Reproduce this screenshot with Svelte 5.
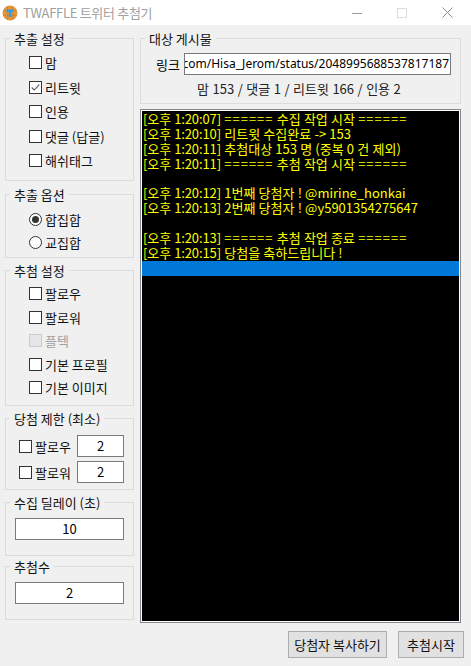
<script lang="ts">
	const extract = [
		{ label: '맘', checked: false },
		{ label: '리트윗', checked: true },
		{ label: '인용', checked: false },
		{ label: '댓글 (답글)', checked: false },
		{ label: '해쉬태그', checked: false }
	];
	const filters = [
		{ label: '팔로우', disabled: false },
		{ label: '팔로워', disabled: false },
		{ label: '플텍', disabled: true },
		{ label: '기본 프로필', disabled: false },
		{ label: '기본 이미지', disabled: false }
	];
	const limits = ['팔로우', '팔로워'];

	// banner: wrapped in ====== on both sides
	const log = [
		{ time: '1:20:07', text: '수집 작업 시작', banner: true },
		{ time: '1:20:10', text: '리트윗 수집완료 -> 153' },
		{ time: '1:20:11', text: '추첨대상 153 명 (중복 0 건 제외)' },
		{ time: '1:20:11', text: '추첨 작업 시작', banner: true },
		null,
		{ time: '1:20:12', text: '1번째 당첨자 ! @mirine_honkai' },
		{ time: '1:20:13', text: '2번째 당첨자 ! @y5901354275647' },
		null,
		{ time: '1:20:13', text: '추첨 작업 종료', banner: true },
		{ time: '1:20:15', text: '당첨을 축하드립니다 !' }
	];
</script>

<div class="window">
	<header class="titlebar">
		<svg class="logo" viewBox="0 0 16 16" width="16" height="16" aria-hidden="true">
			<circle cx="8" cy="8" r="7.5" fill="#e2963c" />
			<path d="M1.500 5.500h13M1 10.500h14M5.500 1.500v13M10.500 1.500v13" stroke="#c97a28" stroke-width=".6" />
			<path d="M4.500 4.500h7v2.200H9.200V12H6.800V6.700H4.500z" fill="#2f9fe6" />
		</svg>
		<span class="title">TWAFFLE 트위터 추첨기</span>
		<div class="controls">
			<svg width="10" height="10" viewBox="0 0 10 10"><path d="M0 5.5h10" stroke="#9a9a9a" /></svg>
			<svg width="10" height="10" viewBox="0 0 10 10"><rect x=".5" y=".5" width="9" height="9" fill="none" stroke="#dcdcdc" /></svg>
			<svg width="11" height="11" viewBox="0 0 11 11"><path d="M.5 .5l10 10M10.500 .5l-10 10" stroke="#8a8a8a" fill="none" /></svg>
		</div>
	</header>

	<main class="body">
		<aside class="side">
			<fieldset class="group g-extract">
				<legend>추출 설정</legend>
				<div class="stack">
					{#each extract as item}
						<label class="check">
							<span class="box">
								{#if item.checked}
									<svg viewBox="0 0 13 13" width="11" height="11"><path d="M2 6.500l3 3 6-6.500" fill="none" stroke="#555" stroke-width="1.300" /></svg>
								{/if}
							</span>
							{item.label}
						</label>
					{/each}
				</div>
			</fieldset>

			<fieldset class="group g-option">
				<legend>추출 옵션</legend>
				<div class="stack radios">
					<label class="check"><span class="radio on"></span>합집합</label>
					<label class="check"><span class="radio"></span>교집합</label>
				</div>
			</fieldset>

			<fieldset class="group g-filter">
				<legend>추첨 설정</legend>
				<div class="stack filters">
					{#each filters as item}
						<label class="check" class:disabled={item.disabled}>
							<span class="box"></span>
							{item.label}
						</label>
					{/each}
				</div>
			</fieldset>

			<fieldset class="group g-limit">
				<legend>당첨 제한 (최소)</legend>
				<div class="limits">
					{#each limits as item}
						<div class="limit">
							<label class="check"><span class="box"></span>{item}</label>
							<div class="field num">2</div>
						</div>
					{/each}
				</div>
			</fieldset>

			<fieldset class="group g-single">
				<legend>수집 딜레이 (초)</legend>
				<div class="field wide">10</div>
			</fieldset>

			<fieldset class="group g-single count">
				<legend>추첨수</legend>
				<div class="field wide">2</div>
			</fieldset>
		</aside>

		<section class="content">
			<fieldset class="group g-target">
				<legend>대상 게시물</legend>
				<div class="link-row">
					<span class="link-label">링크</span>
					<div class="field link"><span>https://x.com/Hisa_Jerom/status/2048995688537817187</span></div>
				</div>
				<div class="stats">맘 153 / 댓글 1 / 리트윗 166 / 인용 2</div>
			</fieldset>

			<div class="log">
				{#each log as row}
					<div class="line">{#if row}<span class="time">[오후 {row.time}]</span> {#if row.banner}<span class="eq">======</span> {row.text} <span class="eq">======</span>{:else}{row.text}{/if}{/if}</div>
				{/each}
				<div class="line selected"></div>
			</div>

			<div class="actions">
				<button class="copy">당첨자 복사하기</button>
				<button class="start">추첨시작</button>
			</div>
		</section>
	</main>
</div>

<style>
	:global(body) {
		margin: 0;
		background: #f0f0f0;
	}

	.window {
		width: 471px;
		height: 666px;
		overflow: hidden;
		background: #f0f0f0;
		color: #000;
		font-family: 'Noto Sans CJK KR', 'Noto Sans', sans-serif;
		font-size: 13px;
		line-height: 15px;
	}

	.titlebar {
		display: flex;
		align-items: center;
		height: 25px;
		padding-left: 2px;
		background: #fff;
	}
	.logo {
		margin-right: 5px;
	}
	.title {
		color: #a0a0a0;
		letter-spacing: -0.300px;
	}
	.controls {
		display: flex;
		align-items: center;
		gap: 35px;
		margin-left: auto;
		margin-right: 18px;
	}

	.body {
		display: flex;
		gap: 6px;
		padding: 6px 7px 0 5px;
	}

	.side {
		display: flex;
		flex-direction: column;
		width: 129px;
		flex: none;
	}

	.group {
		margin: 0;
		padding: 0;
		min-width: 0;
		border: 1px solid #dcdcdc;
		box-sizing: border-box;
	}
	legend {
		margin-left: 4px;
		padding: 0 4px;
		line-height: 15px;
		color: #111;
	}

	.g-extract {
		height: 150px;
	}
	.g-option {
		height: 71px;
		margin-top: 6px;
	}
	.g-filter {
		height: 143px;
		margin-top: 5px;
	}
	.g-limit {
		height: 79px;
		margin-top: 5px;
	}
	.g-single {
		height: 61px;
		margin-top: 5px;
	}
	.g-single.count {
		margin-top: 3px;
	}

	.stack {
		display: flex;
		flex-direction: column;
		gap: 9.500px;
		padding: 9px 0 0 23px;
	}
	.radios {
		gap: 8px;
		padding-top: 10px;
	}
	.filters {
		gap: 8.500px;
		padding-top: 8px;
	}

	.check {
		display: flex;
		align-items: center;
		gap: 3px;
		height: 15px;
		white-space: nowrap;
		color: #111;
	}
	.check.disabled {
		color: #a0a0a0;
	}

	.box {
		display: flex;
		align-items: center;
		justify-content: center;
		width: 11px;
		height: 11px;
		flex: none;
		background: #fff;
		border: 1px solid #333;
	}
	.disabled .box {
		background: #e6e6e6;
		border-color: #ccc;
	}

	.radio {
		position: relative;
		width: 11px;
		height: 11px;
		flex: none;
		background: #fff;
		border: 1px solid #333;
		border-radius: 50%;
	}
	.radio.on::after {
		content: '';
		position: absolute;
		inset: 2px;
		border-radius: 50%;
		background: #333;
	}

	.field {
		box-sizing: border-box;
		height: 22px;
		background: #fff;
		border: 1px solid #7a7a7a;
		text-align: center;
		line-height: 20px;
	}
	.wide {
		width: 109px;
		margin: 8px 0 0 9px;
	}

	.limits {
		display: flex;
		flex-direction: column;
		gap: 4px;
		padding: 9px 0 0 13px;
	}
	.limit {
		display: flex;
		align-items: center;
		justify-content: space-between;
		width: 105px;
	}
	.num {
		width: 47px;
	}

	.content {
		display: flex;
		flex-direction: column;
		width: 321px;
		flex: none;
	}
	.g-target {
		height: 73px;
	}
	.link-row {
		display: flex;
		align-items: center;
		padding-top: 7px;
	}
	.link-label {
		margin-left: 15px;
		width: 28px;
		flex: none;
	}
	.link {
		width: 267px;
		overflow: hidden;
		display: flex;
		justify-content: flex-end;
		white-space: nowrap;
		padding-right: 1px;
		font-family: 'Noto Sans', sans-serif;
		font-size: 12px;
		line-height: 20px;
	}
	.stats {
		margin-top: 6px;
		padding-left: 56px;
		color: #222;
		word-spacing: 0.600px;
	}

	.log {
		box-sizing: border-box;
		width: 321px;
		height: 514px;
		margin-top: 5px;
		padding: 2px 1px 1px;
		background: #000;
		border: 1px solid #828790;
		outline: 1px solid #fff;
		outline-offset: -2px;
		color: #ffff00;
		line-height: 14.900px;
		word-spacing: 0.300px;
	}
	.line {
		height: 14.900px;
		padding-left: 1px;
		white-space: pre;
	}
	.time {
		letter-spacing: -0.100px;
	}
	.eq {
		letter-spacing: 1px;
	}
	.selected {
		background: #0078d7;
	}

	.actions {
		display: flex;
		justify-content: flex-end;
		gap: 11px;
		margin-top: 8px;
		margin-right: -3px;
	}
	button {
		box-sizing: border-box;
		height: 27px;
		padding: 0;
		background: #e1e1e1;
		border: 1px solid #adadad;
		font: inherit;
		color: #111;
	}
	.copy {
		width: 99px;
	}
	.start {
		width: 66px;
	}
</style>
